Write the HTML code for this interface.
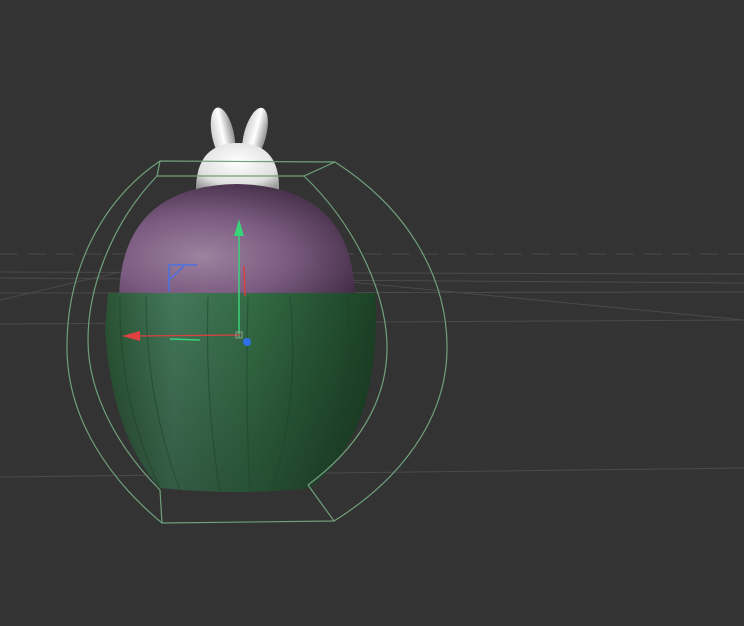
<!DOCTYPE html>
<html><head><style>
html,body{margin:0;padding:0;background:#333333;width:744px;height:626px;overflow:hidden}
</style></head><body>
<svg width="744" height="626" viewBox="0 0 744 626" xmlns="http://www.w3.org/2000/svg">
<defs>
<radialGradient id="pur" cx="0.35" cy="0.65" r="0.75">
<stop offset="0" stop-color="#9e829f"/><stop offset="0.5" stop-color="#7a5a80"/><stop offset="1" stop-color="#3e2a40"/>
</radialGradient>
<radialGradient id="wh" cx="0.5" cy="0.4" r="0.7">
<stop offset="0" stop-color="#ffffff"/><stop offset="0.7" stop-color="#e0e0e0"/><stop offset="1" stop-color="#9a9a9a"/>
</radialGradient>
<linearGradient id="grn" x1="0" x2="1" y1="0" y2="0">
<stop offset="0" stop-color="#2a5434"/><stop offset="0.25" stop-color="#44785a"/><stop offset="0.55" stop-color="#336a44"/><stop offset="1" stop-color="#1c4226"/>
</linearGradient>
<linearGradient id="shade" x1="0" x2="0" y1="0" y2="1">
<stop offset="0" stop-color="#000" stop-opacity="0"/><stop offset="1" stop-color="#000" stop-opacity="0.25"/>
</linearGradient>
<linearGradient id="ear" x1="0" x2="1">
<stop offset="0" stop-color="#cfcfcf"/><stop offset="0.5" stop-color="#ffffff"/><stop offset="1" stop-color="#8f8f8f"/>
</linearGradient>
</defs>
<rect width="744" height="626" fill="#333333"/>
<g stroke="#4a4a4a" stroke-width="1" fill="none">
<line x1="0" y1="254" x2="744" y2="254" stroke-dasharray="18,10"/>
<line x1="0" y1="272" x2="744" y2="274"/>
<line x1="0" y1="278" x2="744" y2="283"/>
<line x1="0" y1="293" x2="744" y2="292"/>
<line x1="0" y1="300" x2="120" y2="272"/>
<line x1="350" y1="282" x2="744" y2="320"/>
<line x1="0" y1="324" x2="744" y2="320"/>
<line x1="0" y1="477" x2="744" y2="468"/>
</g>
<ellipse cx="223" cy="135" rx="11" ry="28" fill="url(#ear)" transform="rotate(-12 223 135)"/>
<ellipse cx="255" cy="135" rx="11" ry="28" fill="url(#ear)" transform="rotate(15 255 135)"/>
<path d="M196 190 Q196 143 238 143 Q280 143 279 190 Z" fill="url(#wh)"/>
<path d="M119 296 Q122 186 237 184 Q352 186 355 296 Z" fill="url(#pur)"/>
<path d="M108 293 L375 293 Q378 330 372 370 Q362 445 310 488 Q240 496 160 488 Q112 435 105 330 Z" fill="url(#grn)"/>
<path d="M108 293 L375 293 Q378 330 372 370 Q362 445 310 488 Q240 496 160 488 Q112 435 105 330 Z" fill="url(#shade)"/>
<g stroke="#1e4028" stroke-width="1.2" fill="none" opacity="0.5">
<path d="M120 296 Q118 400 160 488"/>
<path d="M146 296 Q146 400 180 490"/>
<path d="M208 297 Q205 400 220 492"/>
<path d="M248 297 Q245 400 250 492"/>
<path d="M290 297 Q300 400 272 490"/>
<path d="M347 296 Q360 400 310 487"/>
<path d="M362 296 Q375 380 330 470"/>
</g>
<g stroke="#6fa07a" stroke-width="1.2" fill="none">
<path d="M160 161 L335 162 L304 176 L157 176 Z"/>
<path d="M160 161 C95 205 66 280 67 350 C68 420 110 480 162 523"/>
<path d="M157 176 C110 225 88 290 88 340 C88 395 120 450 160 490"/>
<path d="M335 162 C410 210 448 280 447 350 C446 420 400 480 334 521"/>
<path d="M304 176 C360 230 388 300 387 350 C386 405 355 450 308 485"/>
<path d="M160 490 L162 523 L334 521 L308 485"/>
</g>
<line x1="239" y1="232" x2="239" y2="337" stroke="#3ad27a" stroke-width="1.5"/>
<polygon points="239,219 234,236 244,236" fill="#3ad27a"/>
<line x1="244" y1="266" x2="245" y2="296" stroke="#d94040" stroke-width="1.5"/>
<line x1="134" y1="336" x2="240" y2="335" stroke="#d94040" stroke-width="1.2"/>
<polygon points="122,336 140,331 140,341" fill="#e04040"/>
<line x1="170" y1="339" x2="200" y2="340" stroke="#3ad27a" stroke-width="1.5"/>
<path d="M169 292 L169 265 L197 265 M169 280 L184 266" stroke="#4a70e0" stroke-width="1.5" fill="none"/>
<rect x="236" y="332" width="6" height="6" fill="none" stroke="#999"/>
<circle cx="247" cy="342" r="4" fill="#2f6fe8"/>
</svg>
</body></html>
